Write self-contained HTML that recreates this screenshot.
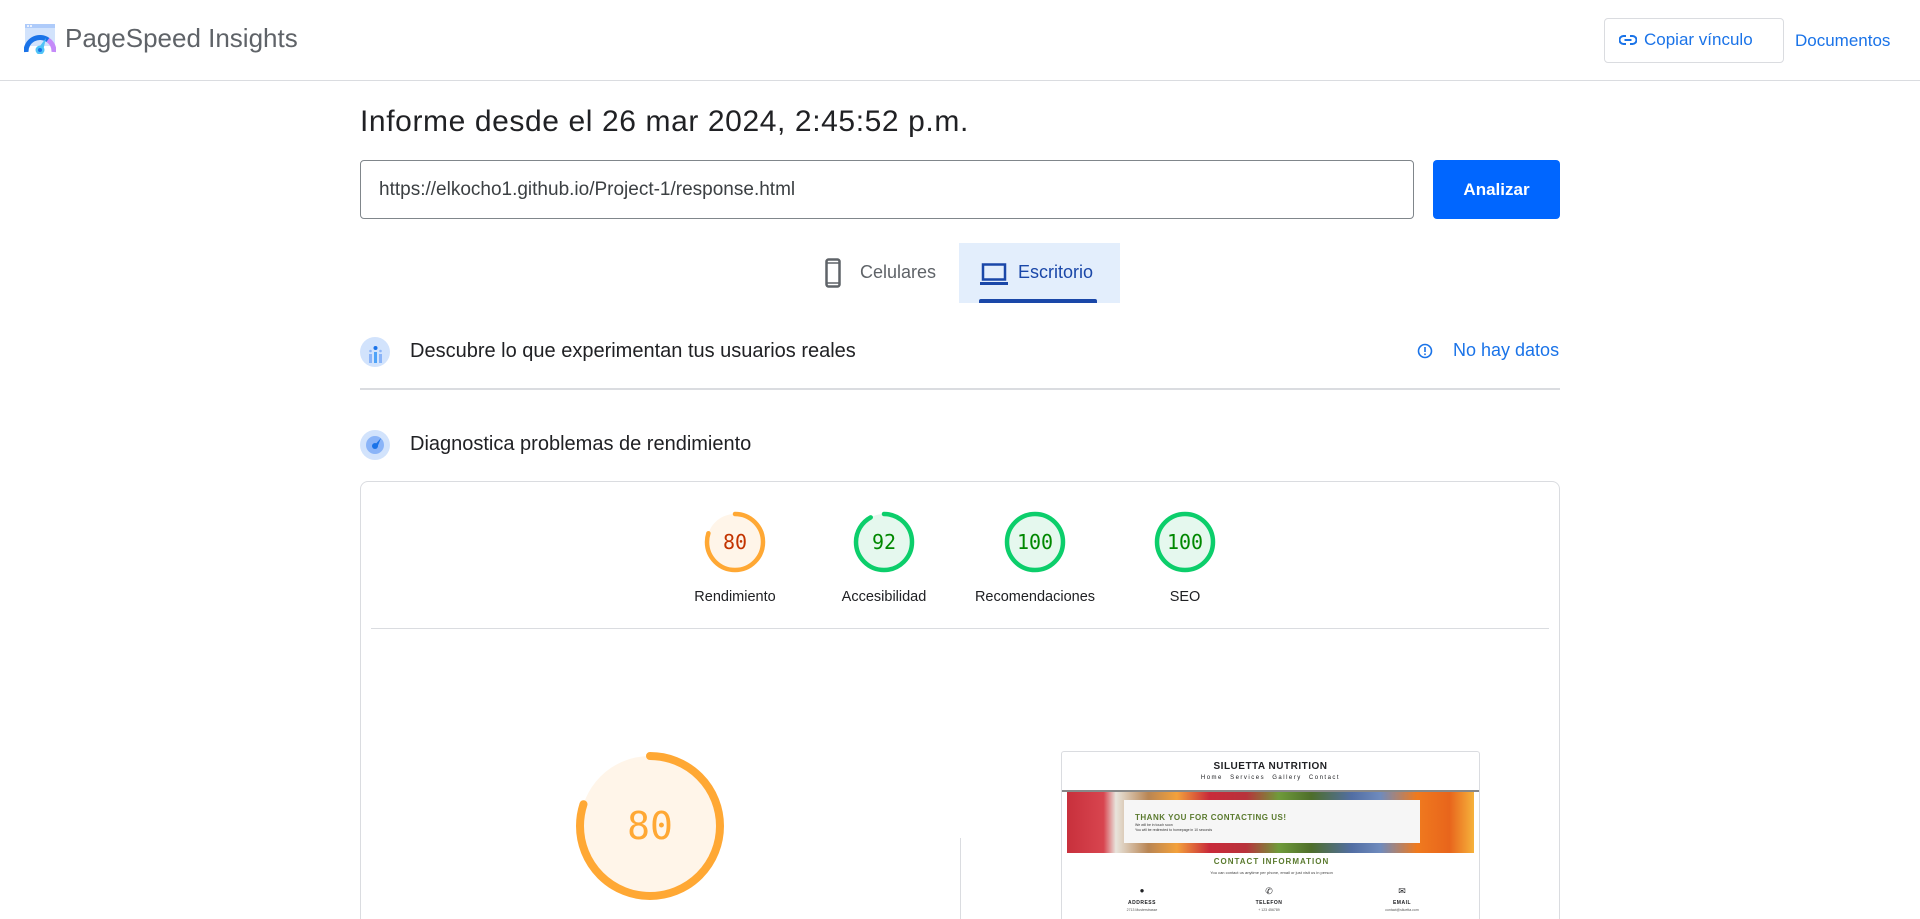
<!DOCTYPE html>
<html><head><meta charset="utf-8">
<style>
*{box-sizing:border-box;margin:0;padding:0}
html,body{width:1920px;height:919px;overflow:hidden}
body{background:#fff;font-family:"Liberation Sans",Arial,sans-serif;color:#202124;position:relative}
.a{position:absolute}
.mono{font-family:"DejaVu Sans Mono","Liberation Mono",monospace}
</style></head><body>
<svg class="a" style="left:24px;top:24px" width="32" height="30" viewBox="0 0 32 30">
<rect x="1" y="0" width="30" height="22" rx="2" fill="#d2e3fc"/>
<rect x="1" y="0" width="30" height="4" fill="#aecbfa"/>
<circle cx="4" cy="2" r="1" fill="#fff"/><circle cx="7" cy="2" r="1" fill="#fff"/>
<path d="M2 28 A14 14 0 0 1 24 16" stroke="#1a73e8" stroke-width="5" fill="none"/>
<path d="M24 16 A14 14 0 0 1 30 28" stroke="#c58af9" stroke-width="5" fill="none"/>
<path d="M13 26 L22 14 L19 27 Z" fill="#4fc3f7"/>
<circle cx="16" cy="26" r="4.5" fill="#4fc3f7"/><circle cx="16" cy="26" r="2" fill="#1a73e8"/>
</svg>
<div class="a" style="left:65px;top:23px;font-size:26px;color:#5f6368">PageSpeed Insights</div>
<div class="a" style="left:1604px;top:18px;width:180px;height:45px;border:1px solid #dadce0;border-radius:4px"></div>
<svg class="a" style="left:1619px;top:33px" width="18" height="14" viewBox="0 0 18 14"><path d="M7 3H4.5a4 4 0 0 0 0 8H7M11 3h2.5a4 4 0 0 1 0 8H11M5.5 7h7" stroke="#1a73e8" stroke-width="2" fill="none"/></svg>
<div class="a" style="left:1644px;top:30px;font-size:17px;color:#1a73e8">Copiar vínculo</div>
<div class="a" style="left:1795px;top:31px;font-size:17px;color:#1a73e8">Documentos</div>
<div class="a" style="left:0;top:80px;width:1920px;height:1px;background:#dadce0"></div>

<div class="a" style="left:360px;top:105px;font-size:30px;letter-spacing:0.6px;color:#202124">Informe desde el 26 mar 2024, 2:45:52 p.m.</div>
<div class="a" style="left:360px;top:160px;width:1054px;height:59px;border:1px solid #80868b;border-radius:4px"></div>
<div class="a" style="left:379px;top:179px;font-size:19px;color:#3c4043">https://elkocho1.github.io/Project-1/response.html</div>
<div class="a" style="left:1433px;top:160px;width:127px;height:59px;background:#0066ff;border-radius:4px;color:#fff;font-weight:bold;font-size:17px;text-align:center;line-height:59px">Analizar</div>

<svg class="a" style="left:825px;top:258px" width="16" height="30" viewBox="0 0 16 30"><rect x="1.5" y="1.5" width="13" height="27" rx="2" stroke="#5f6368" stroke-width="2.5" fill="none"/><line x1="2" y1="5" x2="14" y2="5" stroke="#5f6368" stroke-width="1.5"/><line x1="2" y1="25" x2="14" y2="25" stroke="#5f6368" stroke-width="1.5"/></svg>
<div class="a" style="left:860px;top:262px;font-size:18px;color:#5f6368">Celulares</div>
<div class="a" style="left:959px;top:243px;width:161px;height:60px;background:#e3eefc"></div>
<svg class="a" style="left:980px;top:263px" width="28" height="22" viewBox="0 0 28 22"><rect x="3" y="1.5" width="22" height="15" stroke="#1a47a8" stroke-width="2.5" fill="none"/><rect x="0" y="19" width="28" height="3" fill="#1a47a8"/></svg>
<div class="a" style="left:1018px;top:262px;font-size:18px;color:#1a47a8">Escritorio</div>
<div class="a" style="left:979px;top:299px;width:118px;height:4px;background:#1a47a8;border-radius:2px 2px 0 0"></div>

<svg class="a" style="left:360px;top:337px" width="30" height="30" viewBox="0 0 30 30"><circle cx="15" cy="15" r="15" fill="#d2e3fc"/><rect x="9" y="17" width="3" height="9" fill="#8ab4f8"/><rect x="14" y="15" width="3" height="11" fill="#4fa3f7"/><rect x="19" y="17" width="3" height="9" fill="#8ab4f8"/><circle cx="15.5" cy="11" r="2" fill="#1a73e8"/><circle cx="10.5" cy="14" r="1.3" fill="#8ab4f8"/><circle cx="20.5" cy="14" r="1.3" fill="#8ab4f8"/></svg>
<div class="a" style="left:410px;top:340px;font-size:20px">Descubre lo que experimentan tus usuarios reales</div>
<svg class="a" style="left:1417px;top:343px" width="16" height="16" viewBox="0 0 16 16"><circle cx="8" cy="8" r="6.5" stroke="#1a73e8" stroke-width="1.6" fill="none"/><rect x="7.2" y="4" width="1.6" height="5" fill="#1a73e8"/><rect x="7.2" y="10.5" width="1.6" height="1.6" fill="#1a73e8"/></svg>
<div class="a" style="left:1453px;top:340px;font-size:18px;color:#1a73e8">No hay datos</div>
<div class="a" style="left:360px;top:388px;width:1200px;height:2px;background:#dadce0"></div>

<svg class="a" style="left:360px;top:430px" width="30" height="30" viewBox="0 0 30 30"><circle cx="15" cy="15" r="15" fill="#d2e3fc"/><circle cx="15" cy="15" r="9" fill="#8ab4f8"/><path d="M13 17 L21 8 L17 18 Z" fill="#1a73e8"/><circle cx="15" cy="16" r="3" fill="#1a73e8"/></svg>
<div class="a" style="left:410px;top:433px;font-size:20px">Diagnostica problemas de rendimiento</div>

<div class="a" style="left:360px;top:481px;width:1200px;height:460px;border:1px solid #dadce0;border-radius:8px"></div>
<svg class="a" style="left:0;top:0" width="1920" height="919">
<g stroke-linecap="round">
<circle cx="735" cy="542" r="28" fill="#fff5e9"/><circle cx="735" cy="542" r="28" fill="none" stroke="#ffa834" stroke-width="4.5" stroke-dasharray="140.7 200" transform="rotate(-90 735 542)"/>
<circle cx="884" cy="542" r="28" fill="#e5f8ee"/><circle cx="884" cy="542" r="28" fill="none" stroke="#0cce6b" stroke-width="4.5" stroke-dasharray="161.8 200" transform="rotate(-90 884 542)"/>
<circle cx="1035" cy="542" r="28" fill="#e5f8ee" stroke="#0cce6b" stroke-width="4.5"/>
<circle cx="1185" cy="542" r="28" fill="#e5f8ee" stroke="#0cce6b" stroke-width="4.5"/>
<circle cx="650" cy="826" r="70" fill="#fff5e9"/><circle cx="650" cy="826" r="70" fill="none" stroke="#ffa834" stroke-width="8" stroke-dasharray="351.9 500" transform="rotate(-90 650 826)"/>
</g>
<g font-family="DejaVu Sans Mono, Liberation Mono, monospace" text-anchor="middle" font-size="20">
<text x="735" y="549" fill="#c33300">80</text>
<text x="884" y="549" fill="#008800">92</text>
<text x="1035" y="549" fill="#008800">100</text>
<text x="1185" y="549" fill="#008800">100</text>
<text x="650" y="839" fill="#ffa834" font-size="38">80</text>
</g>
<g font-family="Liberation Sans, Arial, sans-serif" font-size="14.5" fill="#202124" text-anchor="middle">
<text x="735" y="601">Rendimiento</text>
<text x="884" y="601">Accesibilidad</text>
<text x="1035" y="601">Recomendaciones</text>
<text x="1185" y="601">SEO</text>
</g>
<rect x="371" y="628" width="1178" height="1" fill="#dadce0"/>
<rect x="960" y="838" width="1" height="81" fill="#dadce0"/>
</svg>

<div class="a" style="left:1061px;top:751px;width:419px;height:200px;border:1px solid #dadce0;border-radius:3px;overflow:hidden;background:#fff">
  <div style="text-align:center;font-size:10px;font-weight:bold;letter-spacing:.5px;margin-top:9px">SILUETTA NUTRITION</div>
  <div style="text-align:center;font-size:6px;letter-spacing:1.5px;margin-top:3px;word-spacing:4px">Home Services Gallery Contact</div>
  <div style="position:absolute;left:5px;top:39px;width:407px;height:62px;background:linear-gradient(90deg,#c8303c 0%,#d8454f 9%,#e8e4dc 12%,#b98553 20%,#f3a13b 27%,#c92a3a 35%,#b8323b 44%,#6f9b3a 52%,#4e6e2a 60%,#526ea4 70%,#6f8bbd 77%,#f07a1e 86%,#e8651c 94%,#f6b23b 100%)"></div>
  <div style="position:absolute;left:0;top:38px;width:419px;height:2px;background:#888"></div>
  <div style="position:absolute;left:62px;top:48px;width:296px;height:43px;background:#f6f6f6"></div>
  <div style="position:absolute;left:73px;top:61px;font-size:8px;font-weight:bold;color:#5a7a2e;letter-spacing:.5px">THANK YOU FOR CONTACTING US!</div>
  <div style="position:absolute;left:73px;top:71px;font-size:3.5px;color:#333;line-height:5px">We will be in touch soon<br>You will be redirected to homepage in 10 seconds</div>
  <div style="position:absolute;left:0;top:105px;width:419px;text-align:center;font-size:8px;font-weight:bold;color:#5a7a2e;letter-spacing:1px">CONTACT INFORMATION</div>
  <div style="position:absolute;left:0;top:118px;width:419px;text-align:center;font-size:4px;color:#444">You can contact us anytime per phone, email or just visit us in person</div>
  <div style="position:absolute;left:70px;top:134px;width:20px;text-align:center;font-size:8px">●</div>
  <div style="position:absolute;left:197px;top:134px;width:20px;text-align:center;font-size:9px">✆</div>
  <div style="position:absolute;left:330px;top:134px;width:20px;text-align:center;font-size:9px">✉</div>
  <div style="position:absolute;left:40px;top:148px;width:80px;text-align:center;font-size:5px;font-weight:bold;letter-spacing:.5px">ADDRESS</div>
  <div style="position:absolute;left:167px;top:148px;width:80px;text-align:center;font-size:5px;font-weight:bold;letter-spacing:.5px">TELEFON</div>
  <div style="position:absolute;left:300px;top:148px;width:80px;text-align:center;font-size:5px;font-weight:bold;letter-spacing:.5px">EMAIL</div>
  <div style="position:absolute;left:40px;top:156px;width:80px;text-align:center;font-size:3.5px;color:#555">2713 Musterstrasse</div>
  <div style="position:absolute;left:167px;top:156px;width:80px;text-align:center;font-size:3.5px;color:#555">+ 123 456789</div>
  <div style="position:absolute;left:300px;top:156px;width:80px;text-align:center;font-size:3.5px;color:#555">contact@siluetta.com</div>
</div>
</body></html>
